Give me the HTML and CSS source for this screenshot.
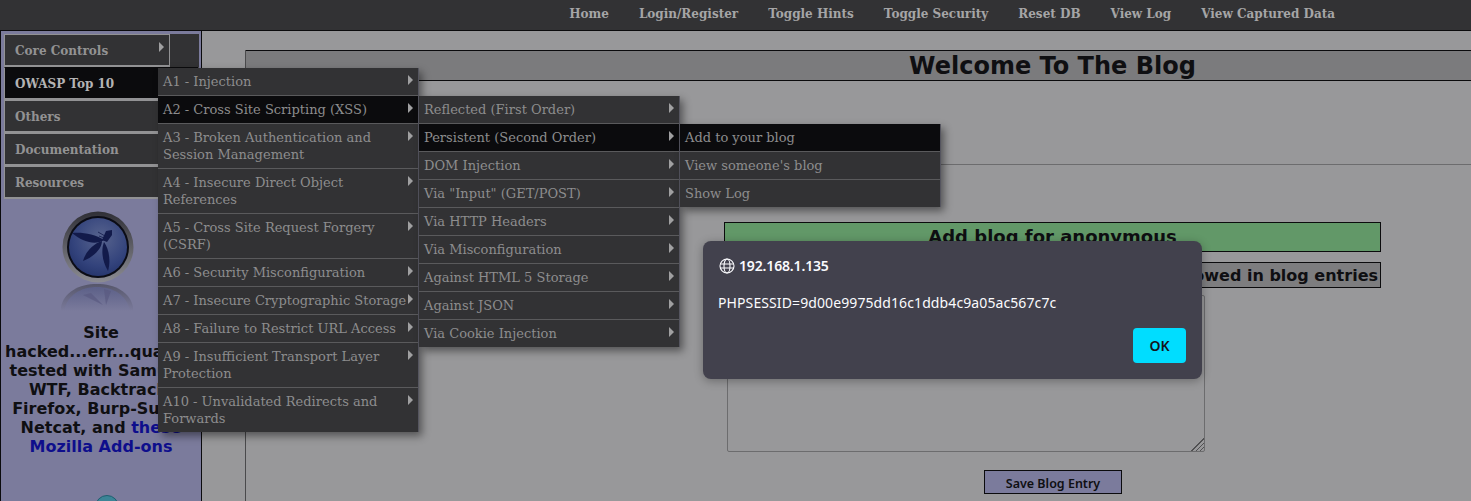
FILE: index.html
```html
<!DOCTYPE html>
<html lang="en">
<head>
  <meta charset="UTF-8" />
  <title>Welcome To The Blog</title>
  <link rel="stylesheet" href="styles.css">
</head>
<body>

<header class="topbar">
  <a>Home</a>
  <a>Login/Register</a>
  <a>Toggle Hints</a>
  <a>Toggle Security</a>
  <a>Reset DB</a>
  <a>View Log</a>
  <a>View Captured Data</a>
</header>

<div class="page">
  <aside class="sidebar">
    <nav class="side-menu">
      <a class="side-item first">Core Controls<i class="arrow"></i></a>
      <a class="side-item active">OWASP Top 10</a>
      <a class="side-item">Others</a>
      <a class="side-item">Documentation</a>
      <a class="side-item">Resources</a>
    </nav>

    <svg class="logo" width="72" height="72" viewBox="0 0 72 72">
      <defs>
        <linearGradient id="ring" x1="0" y1="0" x2="0" y2="1">
          <stop offset="0" stop-color="#2f2f36" />
          <stop offset="0.5" stop-color="#5f5f66" />
          <stop offset="1" stop-color="#8c8c92" />
        </linearGradient>
        <radialGradient id="ball" cx="0.55" cy="0.35" r="0.8">
          <stop offset="0" stop-color="#58648e" />
          <stop offset="0.6" stop-color="#33437c" />
          <stop offset="1" stop-color="#1d2c62" />
        </radialGradient>
      </defs>
      <circle cx="36" cy="36" r="35.5" fill="url(#ring)" />
      <circle cx="36" cy="36" r="31" fill="#0b0c16" />
      <circle cx="36" cy="36" r="29" fill="url(#ball)" />
      <path d="M10 22 C20 21 33 23 42 29 C34 34 22 32 10 22 Z" fill="#121a4a" />
      <path d="M21 50 C24 40 31 33 40 30 C40 37 32 46 21 50 Z" fill="#121a4a" />
      <path d="M46 60 C40 50 39 39 42 31 C47 38 49 50 46 60 Z" fill="#121a4a" />
      <path d="M40 29 L44 20 L50 19 L50 24 L45 31 Z" fill="#121a4a" />
      <path d="M43 25 L36 21 M42 27 L37 25" stroke="#121a4a" stroke-width="0.8" />
    </svg>
    <svg class="logo-shadow" width="72" height="28" viewBox="0 0 72 28">
      <defs>
        <linearGradient id="fade-ring" x1="0" y1="0" x2="0" y2="1">
          <stop offset="0" stop-color="#56566a" />
          <stop offset="1" stop-color="#7b7b9c" />
        </linearGradient>
        <linearGradient id="fade-ball" x1="0" y1="0" x2="0" y2="1">
          <stop offset="0" stop-color="#5c6088" />
          <stop offset="1" stop-color="#7b7b9c" />
        </linearGradient>
      </defs>
      <path d="M0 28 L0 24 C3 9 18 1 36 1 C54 1 69 9 72 24 L72 28 Z" fill="url(#fade-ring)" />
      <path d="M3 28 C6 12 20 4 36 4 C52 4 66 12 69 28 Z" fill="url(#fade-ball)" />
      <path d="M22 12 L42 22 L30 10 Z M43 6 L45 22 L50 8 Z" fill="#5a5a80" opacity="0.7" />
    </svg>

    <p class="side-note">Site hacked...err...quality-tested with Samurai WTF, Backtrack, Firefox, Burp-Suite, Netcat, and <a>these Mozilla Add-ons</a></p>
    <svg class="side-icon" width="24" height="24" viewBox="0 0 24 24">
      <circle cx="12" cy="12" r="11.5" fill="#3c8496" stroke="#1f5f70" />
    </svg>
  </aside>

  <main class="content">
    <div class="title-frame">
      <h1 class="title">Welcome To The Blog</h1>
      <div class="rule"></div>
      <div class="blog-form">
        <div class="banner">Add blog for anonymous</div>
        <div class="notice">HTML tags allowed in blog entries</div>
        <textarea class="entry"></textarea>
        <button class="save">Save Blog Entry</button>
      </div>
    </div>
  </main>
</div>

<ul class="fly fly-top">
  <li>A1 - Injection<i class="arrow"></i></li>
  <li class="on">A2 - Cross Site Scripting (XSS)<i class="arrow"></i></li>
  <li>A3 - Broken Authentication and Session Management<i class="arrow"></i></li>
  <li>A4 - Insecure Direct Object References<i class="arrow"></i></li>
  <li>A5 - Cross Site Request Forgery (CSRF)<i class="arrow"></i></li>
  <li>A6 - Security Misconfiguration<i class="arrow"></i></li>
  <li>A7 - Insecure Cryptographic Storage<i class="arrow"></i></li>
  <li>A8 - Failure to Restrict URL Access<i class="arrow"></i></li>
  <li>A9 - Insufficient Transport Layer Protection<i class="arrow"></i></li>
  <li>A10 - Unvalidated Redirects and Forwards<i class="arrow"></i></li>
</ul>

<ul class="fly fly-xss">
  <li>Reflected (First Order)<i class="arrow"></i></li>
  <li class="on">Persistent (Second Order)<i class="arrow"></i></li>
  <li>DOM Injection<i class="arrow"></i></li>
  <li>Via "Input" (GET/POST)<i class="arrow"></i></li>
  <li>Via HTTP Headers<i class="arrow"></i></li>
  <li>Via Misconfiguration<i class="arrow"></i></li>
  <li>Against HTML 5 Storage<i class="arrow"></i></li>
  <li>Against JSON<i class="arrow"></i></li>
  <li>Via Cookie Injection<i class="arrow"></i></li>
</ul>

<ul class="fly fly-blog">
  <li class="on">Add to your blog</li>
  <li>View someone's blog</li>
  <li>Show Log</li>
</ul>

<div class="dialog">
  <div class="dialog-host">
    <svg width="16" height="16" viewBox="0 0 16 16" fill="none" stroke="#fbfbfe" stroke-width="1.1">
      <circle cx="8" cy="8" r="7" />
      <ellipse cx="8" cy="8" rx="3" ry="7" />
      <path d="M1 6 H15 M1 10 H15" />
    </svg>
    192.168.1.135
  </div>
  <div class="dialog-msg">PHPSESSID=9d00e9975dd16c1ddb4c9a05ac567c7c</div>
  <div class="dialog-actions"><button class="ok">OK</button></div>
</div>

</body>
</html>
```

FILE: styles.css
```css
html, body {
  margin: 0;
  height: 501px;
  overflow: hidden;
}

body {
  position: relative;
  font-family: "DejaVu Sans", sans-serif;
  background: #98989a;
  color: #0f0f12;
}

/* top links */
.topbar {
  display: flex;
  justify-content: flex-end;
  gap: 30px;
  height: 30px;
  padding-right: 136px;
  background: #323234;
  border-bottom: 1px solid #0b0b0d;
  font: bold 12px/29px "DejaVu Serif", serif;
  color: #a5a5a6;
}

.page {
  display: flex;
  height: 470px;
  overflow: hidden;
}

/* left column */
.sidebar {
  width: 200px;
  flex: none;
  border-left: 1px solid #0b0b0d;
  border-right: 1px solid #0b0b0d;
  background: #7b7b9c;
  overflow: hidden;
  display: flex;
  flex-direction: column;
  align-items: center;
}

.side-menu {
  align-self: flex-start;
  width: 195px;
  margin: 3px 0 0 3px;
  background: #323234;
}

.side-item {
  display: block;
  position: relative;
  box-sizing: border-box;
  height: 33px;
  width: 195px;
  padding: 1px 0 0 10px;
  border: 1px solid #929294;
  border-bottom-width: 2px;
  font: bold 12px/31px "DejaVu Serif", serif;
  color: #929293;
}

.side-item.first {
  width: 166px;
}

.side-item.active {
  background: #0b0b0d;
  border-top-color: #0b0b0d;
  color: #b3b3b4;
}

.logo {
  flex: none;
  margin-top: 12px;
  margin-right: 7px;
}

.logo-shadow {
  flex: none;
  margin-right: 9px;
}

.side-note {
  flex: none;
  margin: 12px 0 0;
  padding: 0 2px;
  width: 196px;
  box-sizing: border-box;
  font-weight: bold;
  font-size: 16px;
  line-height: 19px;
  text-align: center;
}

.side-note a {
  color: #0e0e8c;
}

.side-icon {
  flex: none;
  margin: 39px 0 0 12px;
}

/* main column */
.content {
  flex: 1;
  padding: 19px 0 0 43px;
}

.title-frame {
  width: 1613px;
  height: 451px;
  border-left: 1px solid #4a4a4c;
}

.title {
  margin: 0;
  height: 28px;
  padding-top: 1px;
  background: #7b7b7d;
  border-top: 1px solid #0b0b0d;
  border-bottom: 1px solid #0b0b0d;
  text-align: center;
  font-size: 24px;
  line-height: 29px;
}

.rule {
  height: 1px;
  margin-top: 83px;
  background: #6c6c6e;
  width: 1300px;
}

.blog-form {
  width: 657px;
  margin: 57px 0 0 478px;
}

.banner {
  height: 28px;
  background: #629868;
  border: 1px solid #0b0b0d;
  font-weight: bold;
  font-size: 18px;
  line-height: 27px;
  text-align: center;
}

.notice {
  height: 24px;
  margin-top: 10px;
  background: #7d7d7f;
  border: 1px solid #0b0b0d;
  font-weight: bold;
  font-size: 16px;
  line-height: 25px;
  text-align: right;
  padding-right: 2px;
}

.entry {
  display: block;
  box-sizing: border-box;
  width: 478px;
  height: 157px;
  margin: 7px 0 0 3px;
  background: transparent;
  border: 1px solid #6c6c6e;
  border-radius: 2px;
}

.entry::-webkit-resizer {
  background:
    linear-gradient(135deg, #98989a 50%, transparent 50%),
    repeating-linear-gradient(135deg, #505052 0 1px, transparent 1px 3px);
}

.save {
  display: block;
  width: 138px;
  height: 24px;
  margin: 18px 0 0 260px;
  padding: 2px 0 0;
  background: #7b7b9c;
  border: 1px solid #0b0b0d;
  font: 600 12.5px "Noto Sans", sans-serif;
  color: #0f0f12;
}

/* flyout menus */
.fly {
  position: absolute;
  margin: 0;
  padding: 0;
  list-style: none;
  background: #323234;
  box-shadow: 1px 0 0 #55555f, 4px 4px 8px rgba(0, 0, 0, 0.45);
  font: 13px/17px "DejaVu Serif", serif;
  color: #8d8d8e;
}

.fly li {
  position: relative;
  padding: 5px;
  border-bottom: 1px solid #5a5a5c;
  min-height: 17px;
}

.fly li:last-child {
  border-bottom: 0;
}

.fly li.on {
  background: #0b0b0d;
}

.fly-top {
  left: 158px;
  top: 68px;
  width: 260px;
}

.fly-xss {
  left: 419px;
  top: 96px;
  width: 260px;
}

.fly-blog {
  left: 680px;
  top: 124px;
  width: 260px;
}

.arrow {
  position: absolute;
  right: 5px;
  top: 7px;
  width: 0;
  height: 0;
  border-left: 5px solid #a0a0a1;
  border-top: 5px solid transparent;
  border-bottom: 5px solid transparent;
}

/* browser alert */
.dialog {
  position: absolute;
  left: 703px;
  top: 241px;
  width: 499px;
  height: 138px;
  box-sizing: border-box;
  padding: 15px 16px 0 15px;
  background: #42414d;
  border-radius: 8px;
  box-shadow: 0 2px 10px rgba(0, 0, 0, 0.3);
  font-family: "Noto Sans", sans-serif;
  color: #fbfbfe;
}

.dialog-host {
  display: flex;
  align-items: center;
  gap: 4px;
  padding-left: 1px;
  font-size: 14px;
  font-weight: 600;
  letter-spacing: -0.15px;
  line-height: 19px;
}

.dialog-msg {
  margin-top: 18px;
  font-size: 14px;
  line-height: 19px;
  letter-spacing: 0.1px;
}

.dialog-actions {
  display: flex;
  justify-content: flex-end;
  margin-top: 16px;
}

.ok {
  width: 53px;
  height: 35px;
  padding: 0;
  border: 0;
  border-radius: 4px;
  background: #00ddff;
  color: #15141a;
  font: 600 14px "Noto Sans", sans-serif;
}
```
